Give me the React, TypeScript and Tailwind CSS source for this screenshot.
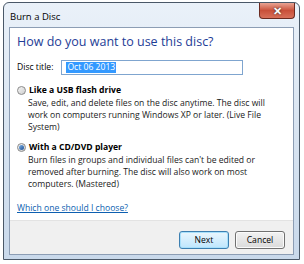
const Radio = ({ checked }: { checked?: boolean }) => (
  <span className="mt-[1px] flex h-[9px] w-[9px] shrink-0 items-center justify-center rounded-full border border-[#8a8a8a] bg-gradient-to-br from-[#f4f4f4] to-[#cfcfcf]">
    {checked && <span className="h-[5px] w-[5px] rounded-full bg-gradient-to-br from-[#7fb2e6] to-[#1c4f94]" />}
  </span>
);

const Option = ({ checked, title, text }: { checked?: boolean; title: string; text: string }) => (
  <div className="flex flex-col">
    <div className="flex items-center gap-[3px]">
      <Radio checked={checked} />
      <span className="font-bold text-black">{title}</span>
    </div>
    <p className="pl-[11px] pr-[12px] leading-[12px] text-[#1a1a1a]">{text}</p>
  </div>
);

export default function App() {
  return (
    <div className="h-[264px] w-[304px] bg-white pl-[3px] pt-[2px] text-[8.6px]" style={{ fontFamily: '"Open Sans", "Noto Sans", sans-serif' }}>
      <div className="flex h-[258px] w-[297px] flex-col rounded-t-[6px] border border-[#4a5868] bg-gradient-to-b from-[#eaf1f9] via-[#d8e4f1] to-[#c9d9eb] px-[5px] pb-[4px]">
        {/* title bar */}
        <div className="flex h-[24px] items-start justify-between">
          <span className="pl-[1px] pt-[7px] text-[9.5px] text-black">Burn a Disc</span>
          <div className="mr-[-1px] flex h-[16px] w-[36px] items-center justify-center rounded-b-[4px] border border-t-0 border-[#6b2a20] bg-gradient-to-b from-[#e8a393] via-[#c9503a] to-[#d8705a] text-[11px] font-bold leading-none text-white" style={{ textShadow: "0 0 2px #222" }}>
            ✕
          </div>
        </div>
        {/* client */}
        <div className="flex flex-1 flex-col border border-[#8c9db4] bg-white">
          <div className="flex flex-1 flex-col px-[7px]">
            <h1 className="mt-[5px] text-[12.5px] leading-[18px] text-[#1e3d96]">How do you want to use this disc?</h1>
            <div className="mt-[9px] flex items-center gap-[8px]">
              <span className="text-black">Disc title:</span>
              <div className="flex h-[15px] w-[182px] items-center border border-[#7fa5cf] px-[4px]">
                <span className="bg-[#3399ff] px-[1px] leading-[11px] text-white">Oct 06 2013</span>
              </div>
            </div>
            <div className="mt-[9px]">
              <Option
                title="Like a USB flash drive"
                text="Save, edit, and delete files on the disc anytime. The disc will work on computers running Windows XP or later. (Live File System)"
              />
            </div>
            <div className="mt-[8px]">
              <Option
                checked
                title="With a CD/DVD player"
                text="Burn files in groups and individual files can't be edited or removed after burning. The disc will also work on most computers. (Mastered)"
              />
            </div>
            <a className="mt-[12px] text-[#0d5fb0] underline">Which one should I choose?</a>
          </div>
          <div className="flex h-[34px] items-start justify-end gap-[6px] border-t border-[#e3e3e3] bg-[#f0f0f0] pr-[8px] pt-[10px]">
            <button className="h-[18px] w-[50px] rounded-[3px] border border-[#3c7fb1] bg-gradient-to-b from-[#eaf6fd] to-[#bee6fd] text-black shadow-[inset_0_0_0_1px_#a8e0fb]">Next</button>
            <button className="h-[18px] w-[50px] rounded-[3px] border border-[#707070] bg-gradient-to-b from-[#f2f2f2] to-[#dadada] text-black shadow-[inset_0_0_0_1px_#fbfbfb]">Cancel</button>
          </div>
        </div>
      </div>
    </div>
  );
}
